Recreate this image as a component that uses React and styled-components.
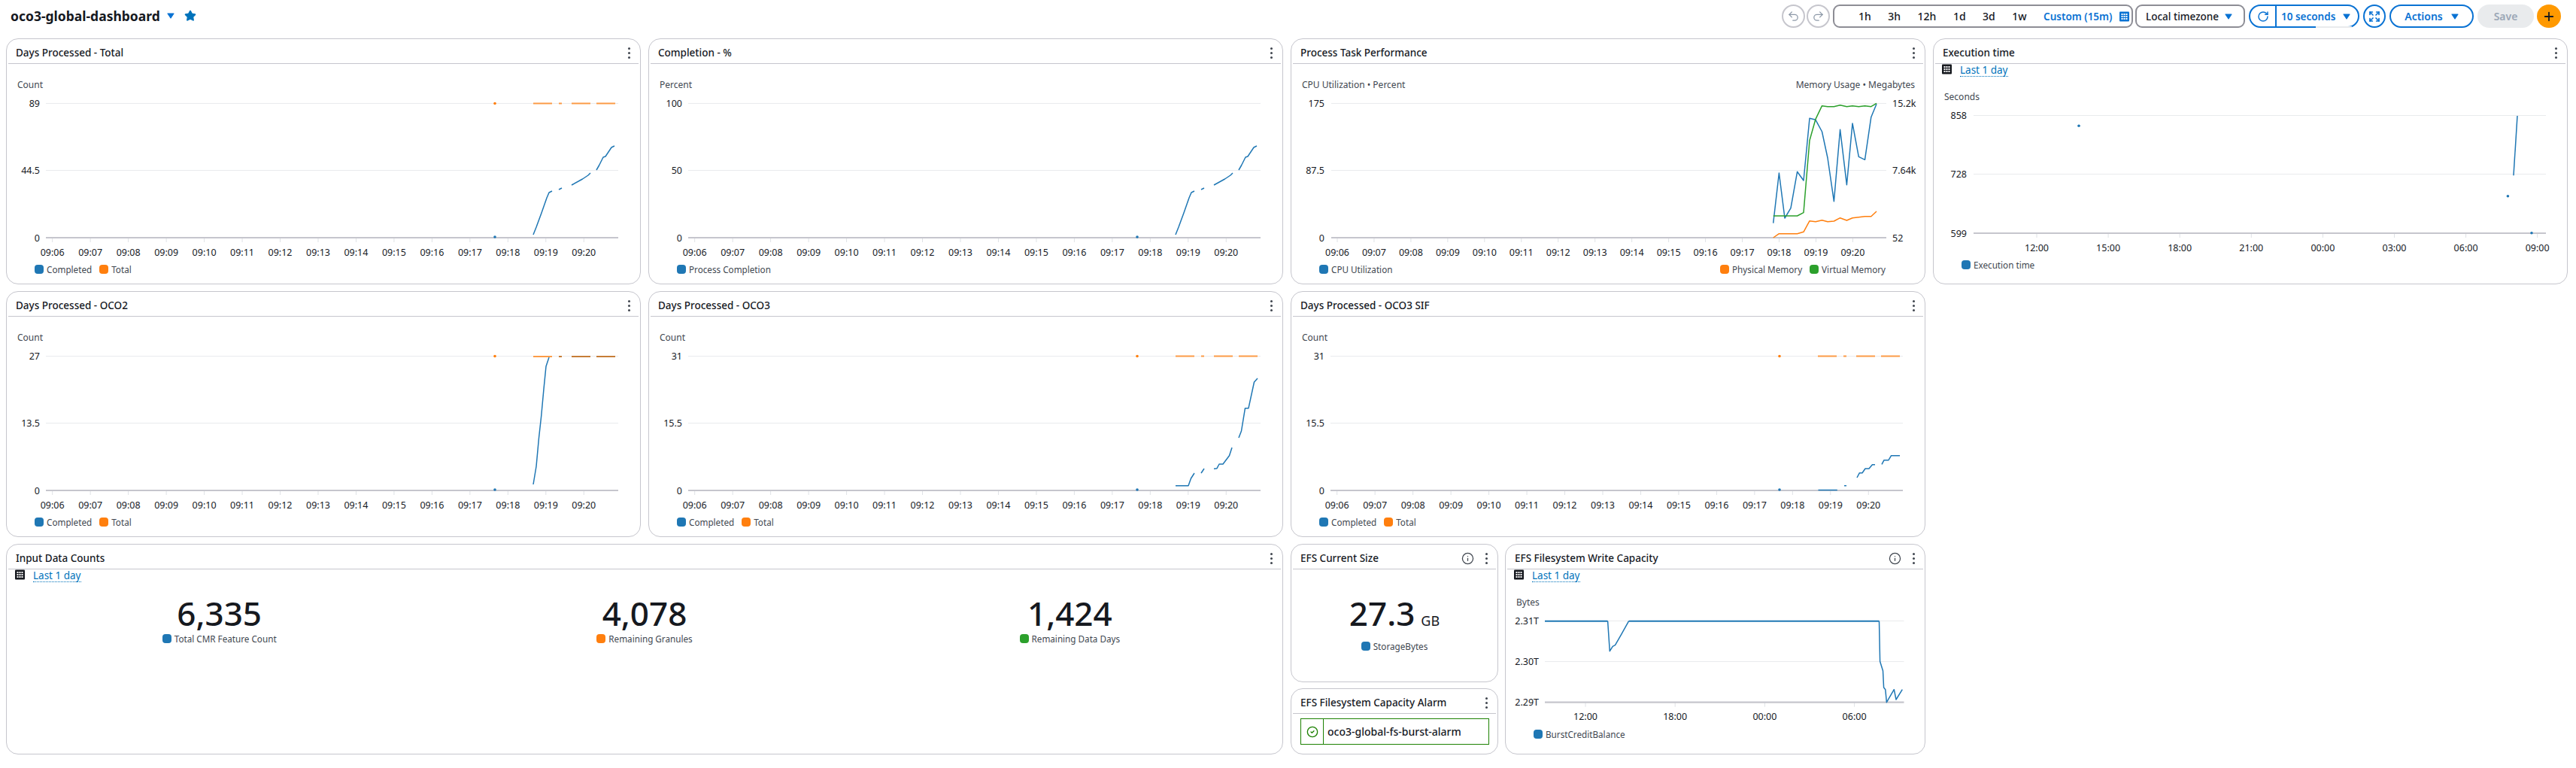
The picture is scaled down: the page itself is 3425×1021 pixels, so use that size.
import React from 'react';
import styled, { createGlobalStyle } from 'styled-components';
import { Undo2, Redo2, RotateCw, Expand, Plus, Star, Info, CircleCheck } from 'lucide-react';

const BLUE = '#1f77b4';
const ORANGE = '#ff7f0e';
const GREEN = '#2ca02c';
const LINK = '#0972d3';

const GlobalStyle = createGlobalStyle`
  html, body { margin: 0; padding: 0; background: #fff; }
  body {
    font-family: "Noto Sans", "Open Sans", sans-serif;
    color: #16191f;
    width: 3425px;
    height: 1021px;
    overflow: hidden;
  }
`;

const Page = styled.div`
  padding: 0 11px 0 8px;
`;

/* top bar */
const TopBar = styled.div`
  display: flex;
  justify-content: space-between;
  height: 51px;
  padding: 6px 9px 0 6px;
  box-sizing: border-box;
`;
const TitleGroup = styled.div`
  display: flex;
  align-items: center;
  height: 30px;
`;
const Title = styled.h1`
  margin: 0;
  font-size: 17.5px;
  font-weight: 700;
  line-height: 30px;
`;
const TitleCaret = styled.span`
  display: flex;
  margin: 0 13px 0 9px;
`;
const Controls = styled.div`
  display: flex;
  height: 31px;
  white-space: nowrap;
`;
const CircleButton = styled.div`
  width: ${(p) => p.$size || 31}px;
  height: 31px;
  margin-right: ${(p) => p.$gap || 0}px;
  border: 2px solid ${(p) => (p.$active ? LINK : '#c6c6cd')};
  border-radius: 50%;
  box-sizing: border-box;
  display: flex;
  align-items: center;
  justify-content: center;
  color: ${(p) => (p.$active ? LINK : '#8d99a8')};
`;
const RangeGroup = styled.div`
  display: flex;
  align-items: center;
  width: 399px;
  margin-right: 3px;
  padding-left: 32px;
  gap: 22.5px;
  border: 2px solid #8d8d95;
  border-radius: 9px;
  box-sizing: border-box;
  font-size: 14px;
  font-weight: 500;
`;
const CustomRange = styled.span`
  display: flex;
  align-items: center;
  gap: 10px;
  color: ${LINK};
  font-size: 13.5px;
  font-weight: 600;
`;
const ZoneSelect = styled.div`
  display: flex;
  align-items: center;
  justify-content: space-between;
  width: 146px;
  margin-right: 5px;
  padding: 0 15px 0 12px;
  border: 2px solid #8d8d95;
  border-radius: 9px;
  box-sizing: border-box;
  font-size: 13.5px;
  font-weight: 500;
`;
const RefreshGroup = styled.div`
  display: flex;
  width: 147px;
  margin-right: 5px;
  border: 2px solid ${LINK};
  border-radius: 16px;
  box-sizing: border-box;
  color: ${LINK};
`;
const RefreshIcon = styled.div`
  display: flex;
  align-items: center;
  justify-content: center;
  width: 33px;
  border-right: 2px solid ${LINK};
`;
const RefreshSelect = styled.div`
  position: relative;
  flex: 1;
  display: flex;
  align-items: center;
  justify-content: space-between;
  padding: 0 10px 0 6px;
  font-size: 13.5px;
  font-weight: 600;
  &::after {
    content: '';
    position: absolute;
    left: 52px;
    right: 8px;
    bottom: -2px;
    height: 2px;
    background: #e9ebed;
  }
`;
const ActionsButton = styled.div`
  display: flex;
  align-items: center;
  justify-content: center;
  gap: 11px;
  width: 112px;
  margin-right: 5px;
  border: 2px solid ${LINK};
  border-radius: 16px;
  box-sizing: border-box;
  color: ${LINK};
  font-size: 14px;
  font-weight: 600;
`;
const SaveButton = styled.div`
  display: flex;
  align-items: center;
  justify-content: center;
  width: 75px;
  margin-right: 4px;
  border-radius: 16px;
  background: #e9ebed;
  color: #9ba7b6;
  font-size: 14px;
  font-weight: 600;
`;
const AddButton = styled.div`
  display: flex;
  align-items: center;
  justify-content: center;
  width: 32px;
  border-radius: 50%;
  background: #ff9900;
  color: #16191f;
`;

/* dashboard */
const Board = styled.div`
  display: grid;
  grid-template-columns: repeat(4, 844px);
  grid-template-rows: 327px 327px 280px;
  column-gap: 10px;
  row-gap: 9px;
`;
const Card = styled.section`
  background: #fff;
  border: 1px solid #c6c6cd;
  border-radius: 16px;
  box-sizing: border-box;
  overflow: hidden;
  display: flex;
  flex-direction: column;
  ${(p) => p.$span && `grid-column: span ${p.$span};`}
  ${(p) => p.$width && `width: ${p.$width}px; flex: none;`}
  ${(p) => p.$height && `height: ${p.$height}px; flex: none;`}
`;
const CardHeader = styled.header`
  display: flex;
  align-items: center;
  height: 32px;
  margin: 0 2px;
  padding: 4px 10px 0 10px;
  border-bottom: 1px solid #c6c6cd;
  box-sizing: content-box;
  height: 28px;
  flex: none;
`;
const CardTitle = styled.h2`
  flex: 1;
  margin: 0;
  font-size: 13.5px;
  font-weight: 500;
`;
const InfoMark = styled.span`
  display: flex;
  margin-right: 14px;
  color: #414750;
`;
const KebabWrap = styled.span`
  display: flex;
  flex-direction: column;
  gap: 3px;
  width: 3px;
  padding: 0 1px;
`;
const KebabDot = styled.i`
  display: block;
  width: 3px;
  height: 3px;
  border-radius: 50%;
  background: #414750;
`;
const DateBar = styled.div`
  display: flex;
  align-items: flex-start;
  gap: 11px;
  height: 24px;
  padding-left: 11px;
  box-sizing: border-box;
  flex: none;
`;
const DateLink = styled.span`
  color: #0073bb;
  font-size: 13.5px;
  line-height: 16px;
  height: 16px;
  border-bottom: 1px dotted #0073bb;
`;
const ChartSvg = styled.svg`
  display: block;
  flex: none;
`;
const AxisText = styled.text`
  font-size: 12.5px;
  fill: #16191f;
  dominant-baseline: central;
`;
const AxisTitle = styled.text`
  font-size: 12px;
  fill: #414750;
  dominant-baseline: central;
`;
const Legend = styled.div`
  display: flex;
  justify-content: ${(p) => (p.$split ? 'space-between' : 'flex-start')};
  height: 16px;
  margin-top: 3px;
  padding: 0 ${(p) => (p.$split ? 52 : 0)}px 0 37px;
`;
const LegendGroup = styled.div`
  display: flex;
  gap: 10px;
`;
const LegendItem = styled.div`
  display: flex;
  align-items: center;
  gap: 4px;
  font-size: 11.7px;
  line-height: 16px;
  color: #414750;
  white-space: nowrap;
`;
const Swatch = styled.i`
  display: block;
  width: 12px;
  height: 12px;
  border-radius: 4px;
  background: ${(p) => p.$color};
`;

/* number widgets */
const StatRow = styled.div`
  display: grid;
  grid-template-columns: repeat(3, 1fr);
  padding-top: 8px;
`;
const Stat = styled.div`
  display: flex;
  flex-direction: column;
  align-items: center;
  ${(p) => p.$lone && 'padding-top: 32px;'}
`;
const StatValue = styled.div`
  display: flex;
  align-items: baseline;
  gap: 8px;
  font-size: 44px;
  font-weight: 500;
  line-height: 52px;
`;
const StatUnit = styled.span`
  font-size: 18px;
  font-weight: 400;
`;
const SplitColumn = styled.div`
  display: flex;
  gap: 9px;
`;
const StackColumn = styled.div`
  display: flex;
  flex-direction: column;
  gap: 8px;
`;
const AlarmBox = styled.div`
  display: flex;
  height: 35px;
  margin: 6px 11px 0 12px;
  border: 1px solid #1d8102;
  box-sizing: border-box;
`;
const AlarmIcon = styled.div`
  display: flex;
  align-items: center;
  justify-content: center;
  width: 29px;
  border-right: 1px solid #1d8102;
  color: #1d8102;
`;
const AlarmName = styled.div`
  padding-left: 5px;
  font-size: 14px;
  font-weight: 500;
  line-height: 33px;
`;

const Caret = ({ color = LINK }) => (
  <svg width="10" height="8" viewBox="0 0 10 8">
    <path d="M1 1h8L5 7z" fill={color} stroke={color} strokeWidth="1.2" strokeLinejoin="round" />
  </svg>
);

const CalendarIcon = ({ color }) => (
  <svg width="13" height="14" viewBox="0 0 13 14">
    <rect x="0" y="0.5" width="13" height="13" rx="1" fill={color} />
    {[2.5, 5.5, 8.5].map((x) =>
      [3, 6, 9].map((y) => <rect key={`${x}-${y}`} x={x} y={y} width="2" height="2" fill="#fff" />)
    )}
  </svg>
);

const Kebab = () => (
  <KebabWrap>
    <KebabDot />
    <KebabDot />
    <KebabDot />
  </KebabWrap>
);

const minutes = ['09:06', '09:07', '09:08', '09:09', '09:10', '09:11', '09:12', '09:13', '09:14', '09:15', '09:16', '09:17', '09:18', '09:19', '09:20'];
const ticksFrom = (labels, start, step) => labels.map((label, i) => ({ label, x: start + i * step }));

const minuteTicks = ticksFrom(minutes, 61.7, 50.47);

// the same gaps show up on every "total" line
const totalLine = (y) => ({
  color: ORANGE,
  width: 2,
  opacity: 0.75,
  paths: [[[701, y], [726, y]], [[735, y], [739, y]], [[752, y], [777, y]], [[785, y], [810, y]]],
});
const dots = (pts, color = BLUE) => pts.map(([x, y]) => ({ x, y, color }));

const progressPaths = [
  [[701, 261], [705, 251], [712, 232], [719, 212], [722, 205], [726, 203]],
  [[735, 201], [739, 199]],
  [[752, 195], [766.5, 187], [774, 182], [777, 179]],
  [[785, 175], [788.5, 169], [794, 158], [797, 157], [805, 145], [809, 143]],
];

const standardAxis = (top, mid) => [
  { y: 86.5, label: top },
  { y: 175.5, label: mid },
  { y: 265, label: '0' },
];

const charts = {
  total: {
    yTitle: 'Count',
    lines: standardAxis('89', '44.5'),
    series: [{ color: BLUE, width: 1.5, paths: progressPaths }, totalLine(86.5)],
    points: [...dots([[650, 264]]), ...dots([[650, 86.5]], ORANGE)],
  },
  completion: {
    yTitle: 'Percent',
    lines: standardAxis('100', '50'),
    series: [{ color: BLUE, width: 1.5, paths: progressPaths }],
    points: dots([[650, 264]]),
  },
  oco2: {
    yTitle: 'Count',
    lines: standardAxis('27', '13.5'),
    series: [
      {
        color: BLUE,
        width: 1.5,
        paths: [
          [[701, 257], [705, 233], [708.4, 196], [711.7, 166], [715, 130], [718, 100], [722, 88]],
        ],
      },
      { color: '#1f77b4', width: 2, paths: [[[735, 87], [739, 87]], [[752, 87], [777, 87]], [[785, 87], [810, 87]]] },
      totalLine(87),
    ],
    points: [...dots([[650, 264]]), ...dots([[650, 86.5]], ORANGE)],
  },
  oco3: {
    yTitle: 'Count',
    lines: standardAxis('31', '15.5'),
    series: [
      {
        color: BLUE,
        width: 1.5,
        paths: [
          [[701, 258.7], [718, 258.7], [721.5, 249], [726, 242]],
          [[735, 242], [739, 236]],
          [[752, 236.3], [756, 235.7], [759, 230], [764, 230], [772.5, 218.7], [776, 208]],
          [[785, 195], [788.5, 186], [793.5, 155.7], [798, 155.7], [805.5, 121], [810, 116]],
        ],
      },
      totalLine(86.5),
    ],
    points: [...dots([[650, 264]]), ...dots([[650, 86.5]], ORANGE)],
  },
  sif: {
    yTitle: 'Count',
    lines: standardAxis('31', '15.5'),
    series: [
      {
        color: BLUE,
        width: 1.5,
        paths: [
          [[701.5, 264.5], [726.8, 264.5]],
          [[736, 258.7], [739, 258.7]],
          [[753, 248], [756.4, 241.7], [760, 241.7], [764, 236], [769, 236], [773.4, 230.7], [777, 230.7]],
          [[786, 230.3], [789, 224.7], [795, 224.7], [798.6, 218.7], [810, 218.7]],
        ],
      },
      totalLine(86.5),
    ],
    points: [...dots([[650, 264]]), ...dots([[650, 86.5]], ORANGE)],
  },
};

const taskChart = {
  yTitle: 'CPU Utilization • Percent',
  yTitleRight: 'Memory Usage • Megabytes',
  titleRightX: 830,
  plot: [54, 792],
  ticks: ticksFrom(minutes, 62, 48.96),
  lines: [
    { y: 86.5, label: '175', right: '15.2k' },
    { y: 175.5, label: '87.5', right: '7.64k' },
    { y: 265, label: '0', right: '52' },
  ],
  series: [
    {
      color: BLUE,
      width: 1.5,
      paths: [[
        [641.7, 245.7], [649.4, 179], [657, 239], [665, 225.7], [673.6, 177.3], [682, 189], [690, 106.3], [698, 108.3],
        [706.5, 124], [714, 159], [722.4, 216.7], [730.6, 121.3], [739.4, 194.7], [747, 113], [755.3, 157.3],
        [763.5, 161.3], [771.8, 104.7], [779, 87.3],
      ]],
    },
    {
      color: ORANGE,
      width: 1.5,
      paths: [[
        [641.7, 265], [649.4, 259.7], [673.6, 259.7], [682, 257.3], [690, 242.7], [698, 243.7], [706.5, 241.7],
        [714, 243.7], [722.4, 243], [730.6, 238.7], [739.4, 242], [747, 238.7], [755.3, 237.7], [763.5, 236.7],
        [771.8, 236.7], [779, 230],
      ]],
    },
    {
      color: GREEN,
      width: 1.5,
      paths: [[
        [641.7, 236], [673.6, 236], [682, 231.7], [690, 135.7], [698, 107.3], [706.5, 89.7], [714, 90.7], [722.4, 90.7],
        [730.6, 88.7], [739.4, 90.7], [747, 89.7], [755.3, 90.7], [763.5, 89.7], [771.8, 90.7], [779, 86.3],
      ]],
    },
  ],
};

const executionChart = {
  yTitle: 'Seconds',
  plot: [54, 815],
  ticks: ticksFrom(['12:00', '15:00', '18:00', '21:00', '00:00', '03:00', '06:00', '09:00'], 138, 95.1),
  lines: [
    { y: 102.5, label: '858' },
    { y: 180.5, label: '728' },
    { y: 259, label: '599' },
  ],
  series: [{ color: BLUE, width: 1.5, paths: [[[772, 182.3], [777, 103]]] }],
  points: dots([[194, 116.3], [764.4, 209.7], [796, 258.7]]),
};

const writeChart = {
  yTitle: 'Bytes',
  plot: [53, 530.5],
  ticks: ticksFrom(['12:00', '18:00', '00:00', '06:00'], 107, 119.2),
  lines: [
    { y: 102.5, label: '2.31T' },
    { y: 156.5, label: '2.30T' },
    { y: 210.7, label: '2.29T' },
  ],
  series: [
    { color: BLUE, width: 2, paths: [[[53, 102.7], [136.6, 102.7]], [[164.6, 102.7], [497.5, 102.7]]] },
    {
      color: BLUE,
      width: 1.5,
      paths: [[
        [136.6, 102.7], [139.3, 142.7], [143.2, 136.3], [146.5, 134.7], [154.7, 120.3], [164.6, 102.7],
      ], [
        [497.5, 102.7], [498.6, 156.3], [502.5, 168.7], [503.6, 191], [505.8, 193.7], [507.4, 210.7],
        [517.3, 193.7], [520, 207], [528.3, 193.7],
      ]],
    },
  ],
};

// chart geometry is in card pixels; top is where the svg starts inside the card
function Chart({ config, width = 842, top = 34, height = 262 }) {
  const { lines, series, points = [], yTitle, yTitleRight, titleRightX, plot = [53, 814], ticks = minuteTicks } = config;
  const baseY = lines[lines.length - 1].y;
  const labelRight = 45;
  return (
    <ChartSvg width={width} height={height} viewBox={`1 ${top} ${width} ${height}`}>
      <AxisTitle x={15} y={lines[0].y - 25}>{yTitle}</AxisTitle>
      {yTitleRight && (
        <AxisTitle x={titleRightX} y={lines[0].y - 25} textAnchor="end">{yTitleRight}</AxisTitle>
      )}
      {lines.slice(0, -1).map((l) => (
        <line key={l.label} x1={plot[0]} x2={plot[1]} y1={l.y} y2={l.y} stroke="#e9ebed" strokeWidth="1.2" />
      ))}
      {ticks.map((t) => (
        <g key={t.label}>
          <line x1={t.x} x2={t.x} y1={baseY} y2={baseY + 6} stroke="#dfe2e6" strokeWidth="1" />
          <AxisText x={t.x} y={baseY + 19} textAnchor="middle">{t.label}</AxisText>
        </g>
      ))}
      <line x1={plot[0]} x2={plot[1]} y1={baseY} y2={baseY} stroke="#c6c6cd" strokeWidth="2.2" />
      {lines.map((l) => (
        <g key={`label-${l.label}`}>
          <AxisText x={labelRight} y={l.y} textAnchor="end">{l.label}</AxisText>
          {l.right && <AxisText x={800} y={l.y}>{l.right}</AxisText>}
        </g>
      ))}
      {series.map((s, i) =>
        s.paths.map((path, j) => (
          <polyline
            key={`${i}-${j}`}
            points={path.map((p) => p.join(',')).join(' ')}
            fill="none"
            stroke={s.color}
            strokeWidth={s.width}
            strokeOpacity={s.opacity || 1}
            strokeLinejoin="round"
          />
        ))
      )}
      {points.map((p) => (
        <circle key={`${p.x}-${p.y}`} cx={p.x} cy={p.y} r="1.8" fill={p.color} />
      ))}
    </ChartSvg>
  );
}

const Key = ({ color, children }) => (
  <LegendItem>
    <Swatch $color={color} />
    {children}
  </LegendItem>
);

const Header = ({ title, info }) => (
  <CardHeader>
    <CardTitle>{title}</CardTitle>
    {info && (
      <InfoMark>
        <Info size={17} strokeWidth={1.8} />
      </InfoMark>
    )}
    <Kebab />
  </CardHeader>
);

const DateRange = () => (
  <DateBar>
    <CalendarIcon color="#16191f" />
    <DateLink>Last 1 day</DateLink>
  </DateBar>
);

const CountCard = ({ title, config }) => (
  <Card>
    <Header title={title} />
    <Chart config={config} />
    <Legend>
      <LegendGroup>
        <Key color={BLUE}>Completed</Key>
        <Key color={ORANGE}>Total</Key>
      </LegendGroup>
    </Legend>
  </Card>
);

const Stats = [
  { value: '6,335', label: 'Total CMR Feature Count', color: BLUE },
  { value: '4,078', label: 'Remaining Granules', color: ORANGE },
  { value: '1,424', label: 'Remaining Data Days', color: GREEN },
];

export default function App() {
  return (
    <>
      <GlobalStyle />
      <Page>
        <TopBar>
          <TitleGroup>
            <Title>oco3-global-dashboard</Title>
            <TitleCaret>
              <Caret />
            </TitleCaret>
            <Star size={16} fill="#0073bb" color="#0073bb" />
          </TitleGroup>
          <Controls>
            <CircleButton $gap={2}>
              <Undo2 size={17} strokeWidth={1.8} />
            </CircleButton>
            <CircleButton $gap={4}>
              <Redo2 size={17} strokeWidth={1.8} />
            </CircleButton>
            <RangeGroup>
              <span>1h</span>
              <span>3h</span>
              <span>12h</span>
              <span>1d</span>
              <span>3d</span>
              <span>1w</span>
              <CustomRange>
                Custom (15m)
                <CalendarIcon color={LINK} />
              </CustomRange>
            </RangeGroup>
            <ZoneSelect>
              Local timezone
              <Caret />
            </ZoneSelect>
            <RefreshGroup>
              <RefreshIcon>
                <RotateCw size={16} strokeWidth={2.2} />
              </RefreshIcon>
              <RefreshSelect>
                10 seconds
                <Caret />
              </RefreshSelect>
            </RefreshGroup>
            <CircleButton $size={30} $gap={5} $active>
              <Expand size={16} strokeWidth={2.6} />
            </CircleButton>
            <ActionsButton>
              Actions
              <Caret />
            </ActionsButton>
            <SaveButton>Save</SaveButton>
            <AddButton>
              <Plus size={18} strokeWidth={2.4} />
            </AddButton>
          </Controls>
        </TopBar>

        <Board>
          <CountCard title="Days Processed - Total" config={charts.total} />
          <Card>
            <Header title="Completion - %" />
            <Chart config={charts.completion} />
            <Legend>
              <Key color={BLUE}>Process Completion</Key>
            </Legend>
          </Card>
          <Card>
            <Header title="Process Task Performance" />
            <Chart config={taskChart} />
            <Legend $split>
              <Key color={BLUE}>CPU Utilization</Key>
              <LegendGroup>
                <Key color={ORANGE}>Physical Memory</Key>
                <Key color={GREEN}>Virtual Memory</Key>
              </LegendGroup>
            </Legend>
          </Card>
          <Card>
            <Header title="Execution time" />
            <DateRange />
            <Chart config={executionChart} top={58} height={232} />
            <Legend>
              <Key color={BLUE}>Execution time</Key>
            </Legend>
          </Card>

          <CountCard title="Days Processed - OCO2" config={charts.oco2} />
          <CountCard title="Days Processed - OCO3" config={charts.oco3} />
          <CountCard title="Days Processed - OCO3 SIF" config={charts.sif} />
          <div />

          <Card $span={2}>
            <Header title="Input Data Counts" />
            <DateRange />
            <StatRow>
              {Stats.map((s) => (
                <Stat key={s.label}>
                  <StatValue>{s.value}</StatValue>
                  <Key color={s.color}>{s.label}</Key>
                </Stat>
              ))}
            </StatRow>
          </Card>
          <SplitColumn>
            <StackColumn>
              <Card $width={276} $height={184}>
                <Header title="EFS Current Size" info />
                <Stat $lone>
                  <StatValue>
                    27.3
                    <StatUnit>GB</StatUnit>
                  </StatValue>
                  <Key color={BLUE}>StorageBytes</Key>
                </Stat>
              </Card>
              <Card $width={276} $height={88}>
                <Header title="EFS Filesystem Capacity Alarm" />
                <AlarmBox>
                  <AlarmIcon>
                    <CircleCheck size={16} strokeWidth={2} />
                  </AlarmIcon>
                  <AlarmName>oco3-global-fs-burst-alarm</AlarmName>
                </AlarmBox>
              </Card>
            </StackColumn>
            <Card $width={559}>
              <Header title="EFS Filesystem Write Capacity" info />
              <DateRange />
              <Chart config={writeChart} width={557} top={58} height={184} />
              <Legend>
                <Key color={BLUE}>BurstCreditBalance</Key>
              </Legend>
            </Card>
          </SplitColumn>
        </Board>
      </Page>
    </>
  );
}
